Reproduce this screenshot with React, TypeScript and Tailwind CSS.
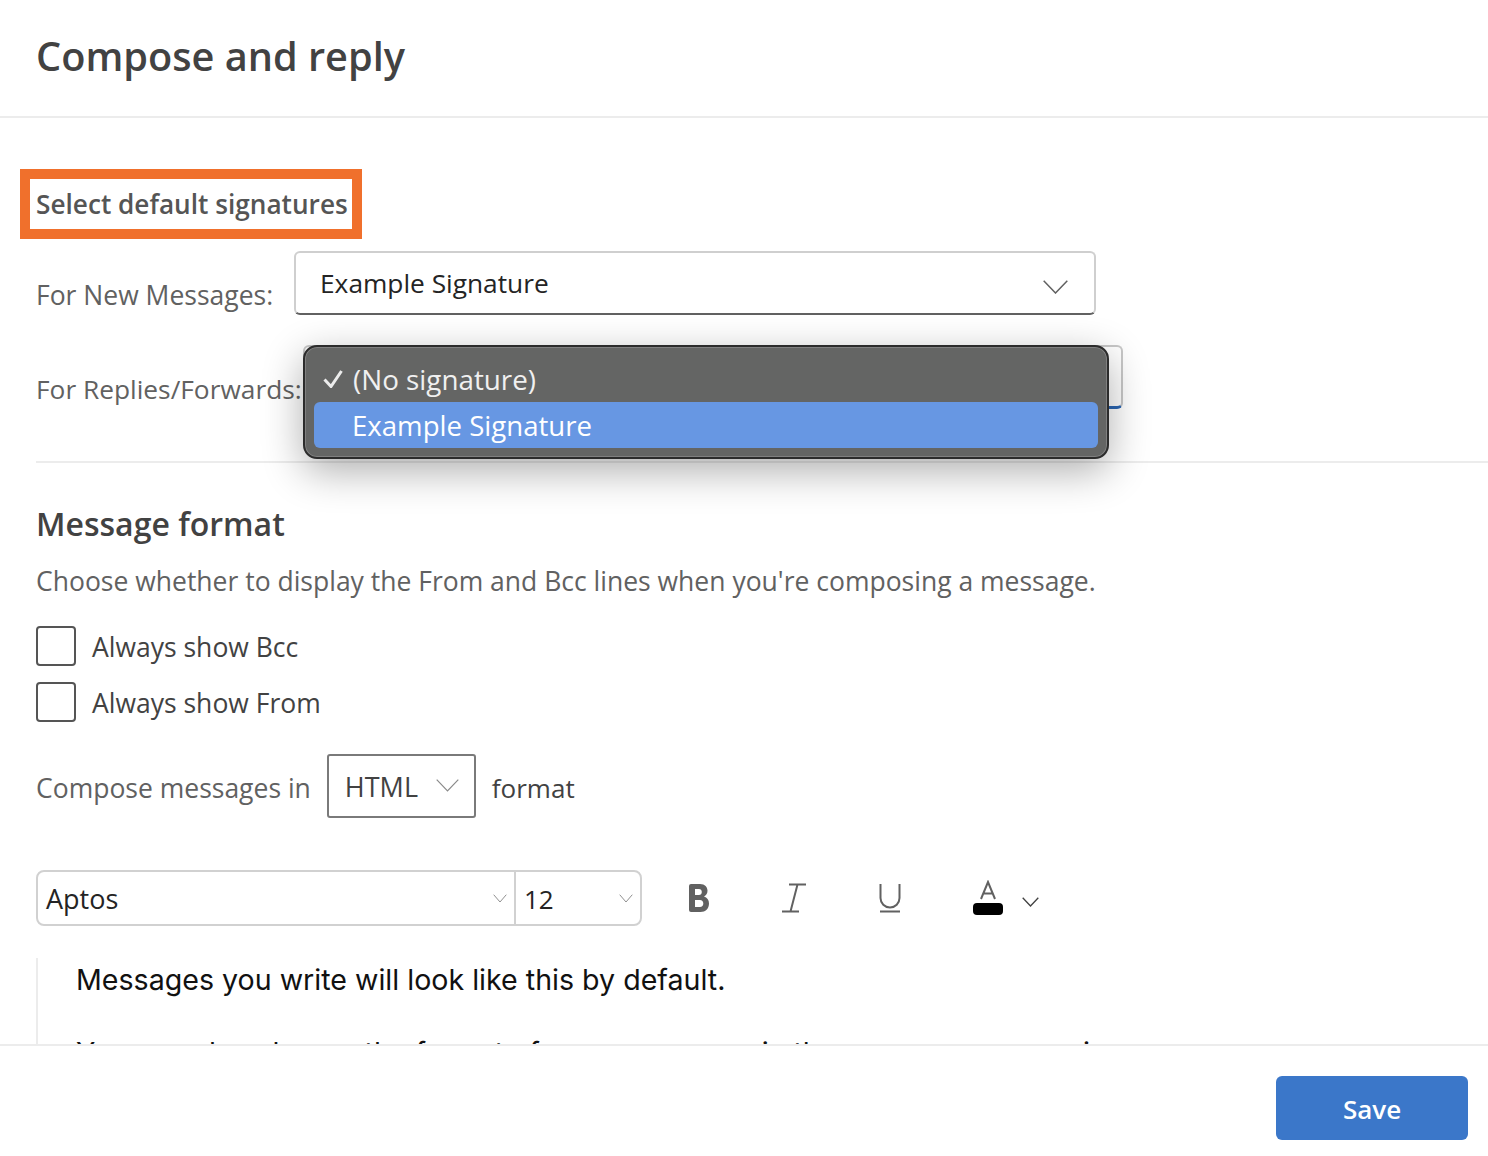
import React from "react";

const Chevron = ({ w, h, stroke = "#616161", sw = 1.5 }: { w: number; h: number; stroke?: string; sw?: number }) => (
  <svg width={w} height={h} viewBox={`0 0 ${w} ${h}`} fill="none" className="shrink-0">
    <path d={`M0.7 0.7 L${w / 2} ${h - 1} L${w - 0.7} 0.7`} stroke={stroke} strokeWidth={sw} />
  </svg>
);

const Check = ({ label }: { label: string }) => (
  <div className="flex items-center h-10 gap-[16px]">
    <span className="w-10 h-10 rounded-[4px] border-2 border-[#555555] box-border" />
    <span className="pt-[4px] text-[26.5px] text-[#424242]">{label}</span>
  </div>
);

export default function App() {
  return (
    <div className="relative w-[1488px] h-[1156px] bg-white flex flex-col overflow-hidden font-['Open_Sans','Noto_Sans',sans-serif] text-[#616161]">
      <header className="h-[118px] shrink-0 border-b-2 border-[#ececec] pl-9 pt-[26px]">
        <h1 className="text-[39.7px] leading-[60px] font-semibold text-[#424242]">Compose and reply</h1>
      </header>

      <main className="flex-1 min-h-0 overflow-hidden pl-9">
        <div className="mt-[51px] -ml-4 w-[342px] h-[70px] border-[10px] border-[#f0702c] flex items-center pl-[6px]">
          <h2 className="pt-[2px] text-[26.2px] font-semibold text-[#555555] whitespace-nowrap">Select default signatures</h2>
        </div>

        <div className="mt-[12px] flex items-start">
          <span className="w-[258px] mt-[25px] text-[26.5px] leading-[38px]">For New Messages:</span>
          <div className="w-[802px] h-[64px] rounded-[6px] border-2 border-[#cfcfcf] border-b-[#616161] flex items-center justify-between pl-[24px] pr-[26px]">
            <span className="pt-[2px] text-[26.3px] text-[#242424]">Example Signature</span>
            <span className="mt-[7px]"><Chevron w={25} h={14} /></span>
          </div>
        </div>

        <div className="mt-[30px] flex items-start">
          <span className="w-[267px] mt-[25px] text-[26.3px] leading-[38px] whitespace-nowrap">For Replies/Forwards:</span>
          <div className="w-[820px] h-[64px] rounded-[6px] border-2 border-[#c8c8c8] border-b-[3px] border-b-[#2b66b4]" />
        </div>

        <div className="mt-[52px] h-[2px] bg-[#ececec]" />

        <h2 className="mt-[36px] text-[32px] leading-[50px] font-semibold text-[#424242]">Message format</h2>
        <p className="mt-[13px] text-[26.5px] leading-[38px] whitespace-nowrap">Choose whether to display the From and Bcc lines when you're composing a message.</p>

        <div className="mt-[26px] flex flex-col gap-[16px]">
          <Check label="Always show Bcc" />
          <Check label="Always show From" />
        </div>

        <div className="mt-[32px] flex items-center h-[64px]">
          <span className="pt-[5px] text-[26.5px] text-[#616161] whitespace-nowrap">Compose messages in</span>
          <div className="ml-[16px] w-[149px] h-[64px] rounded-[3px] border-2 border-[#7a7a7a] flex items-center pl-[16px] gap-[18px]">
            <span className="pt-[2px] text-[27px] text-[#424242]">HTML</span>
            <span className="mb-[2px]"><Chevron w={23} h={13} stroke="#8a8a8a" sw={1.2} /></span>
          </div>
          <span className="pt-[4px] ml-[16px] text-[26px] text-[#424242]">format</span>
        </div>

        <div className="mt-[52px] flex items-center h-[56px]">
          <div className="w-[606px] h-[56px] rounded-[8px] border-2 border-[#d1d1d1] flex">
            <div className="w-[478px] border-r-2 border-[#d1d1d1] flex items-center justify-between pl-[8px] pr-[7px]">
              <span className="pt-[2px] text-[27px] text-[#242424]">Aptos</span>
              <Chevron w={14} h={9} stroke="#8f8f8f" sw={1} />
            </div>
            <div className="flex-1 flex items-center justify-between pl-[8px] pr-[7px]">
              <span className="pt-[2px] text-[26px] text-[#242424]">12</span>
              <Chevron w={14} h={9} stroke="#8f8f8f" sw={1} />
            </div>
          </div>
          <div className="ml-[47px] flex items-center">
            <svg width="20" height="28" viewBox="0 0 20 28" fill="#616161" fillRule="evenodd">
              <path d="M2 0H11C16 0 18.5 3 18.5 6.8C18.5 9.5 17 11.5 15 12.6C18 13.5 20 16 20 19.5C20 24.5 16.5 28 11.5 28H2A2 2 0 0 1 0 26V2A2 2 0 0 1 2 0ZM6 5V11H10C11.7 11 12.8 9.8 12.8 8C12.8 6.2 11.7 5 10 5ZM6 16V23H11C13 23 14.3 21.6 14.3 19.5C14.3 17.4 13 16 11 16Z" />
            </svg>
            <svg className="ml-[72px]" width="26" height="30" viewBox="0 0 26 30" fill="none">
              <path d="M8 1.5h17M1 28.5h17M16.5 1.5L9.5 28.5" stroke="#616161" strokeWidth="2" />
            </svg>
            <svg className="ml-[72px]" width="22" height="30" viewBox="0 0 22 30" fill="none">
              <path d="M1.5 1v14a9.5 9.5 0 0 0 19 0V1M1 28.5h20" stroke="#616161" strokeWidth="2" />
            </svg>
            <svg className="ml-[71px]" width="32" height="36" viewBox="0 0 32 36" fill="none">
              <path d="M9 19L16 2l7 17M11.5 13.5h9" stroke="#616161" strokeWidth="2" />
              <rect x="1" y="23" width="30" height="12" rx="4" fill="#000" />
            </svg>
            <span className="ml-[18px] mt-[8px]"><Chevron w={17} h={10} stroke="#424242" sw={1.3} /></span>
          </div>
        </div>

        <div className="mt-[32px] border-l-2 border-[#ececec] pl-[38px] h-[200px] text-[#111111] text-[28.6px] leading-[44px] font-['Inter','Noto_Sans',sans-serif]">
          <p className="whitespace-nowrap">Messages you write will look like this by default.</p>
          <p className="mt-[29px] whitespace-nowrap">You can also change the format of your messages in the message composing.</p>
        </div>
      </main>

      <footer className="h-[112px] shrink-0 bg-white border-t-2 border-[#ececec] flex justify-end items-start pt-[30px] pr-5">
        <button className="w-[192px] h-[64px] rounded-[6px] bg-[#3b77c9] text-white text-[26px] font-semibold pt-[2px]">Save</button>
      </footer>

      <div className="absolute left-[303px] top-[345px] w-[806px] h-[114px] rounded-[14px] border-2 border-[#2c2c2c] bg-[#646564] shadow-[0_12px_40px_rgba(0,0,0,0.32),inset_0_0_0_1px_#808080] px-[9px] pt-[10px] text-[#f0f0f0]">
        <div className="h-[45px] flex items-center pl-[9px] pb-[2px] gap-[10px]">
          <svg width="20" height="18" viewBox="0 0 20 18" fill="none">
            <path d="M1.5 9.5L8 16.5L18.5 1" stroke="#ececec" strokeWidth="3" />
          </svg>
          <span className="text-[27.8px] leading-[38px] font-medium">(No signature)</span>
        </div>
        <div className="h-[46px] rounded-[6px] bg-[#6797e3] flex items-center pl-[38px] text-white">
          <span className="text-[27.6px] leading-[38px] font-medium">Example Signature</span>
        </div>
      </div>
    </div>
  );
}
